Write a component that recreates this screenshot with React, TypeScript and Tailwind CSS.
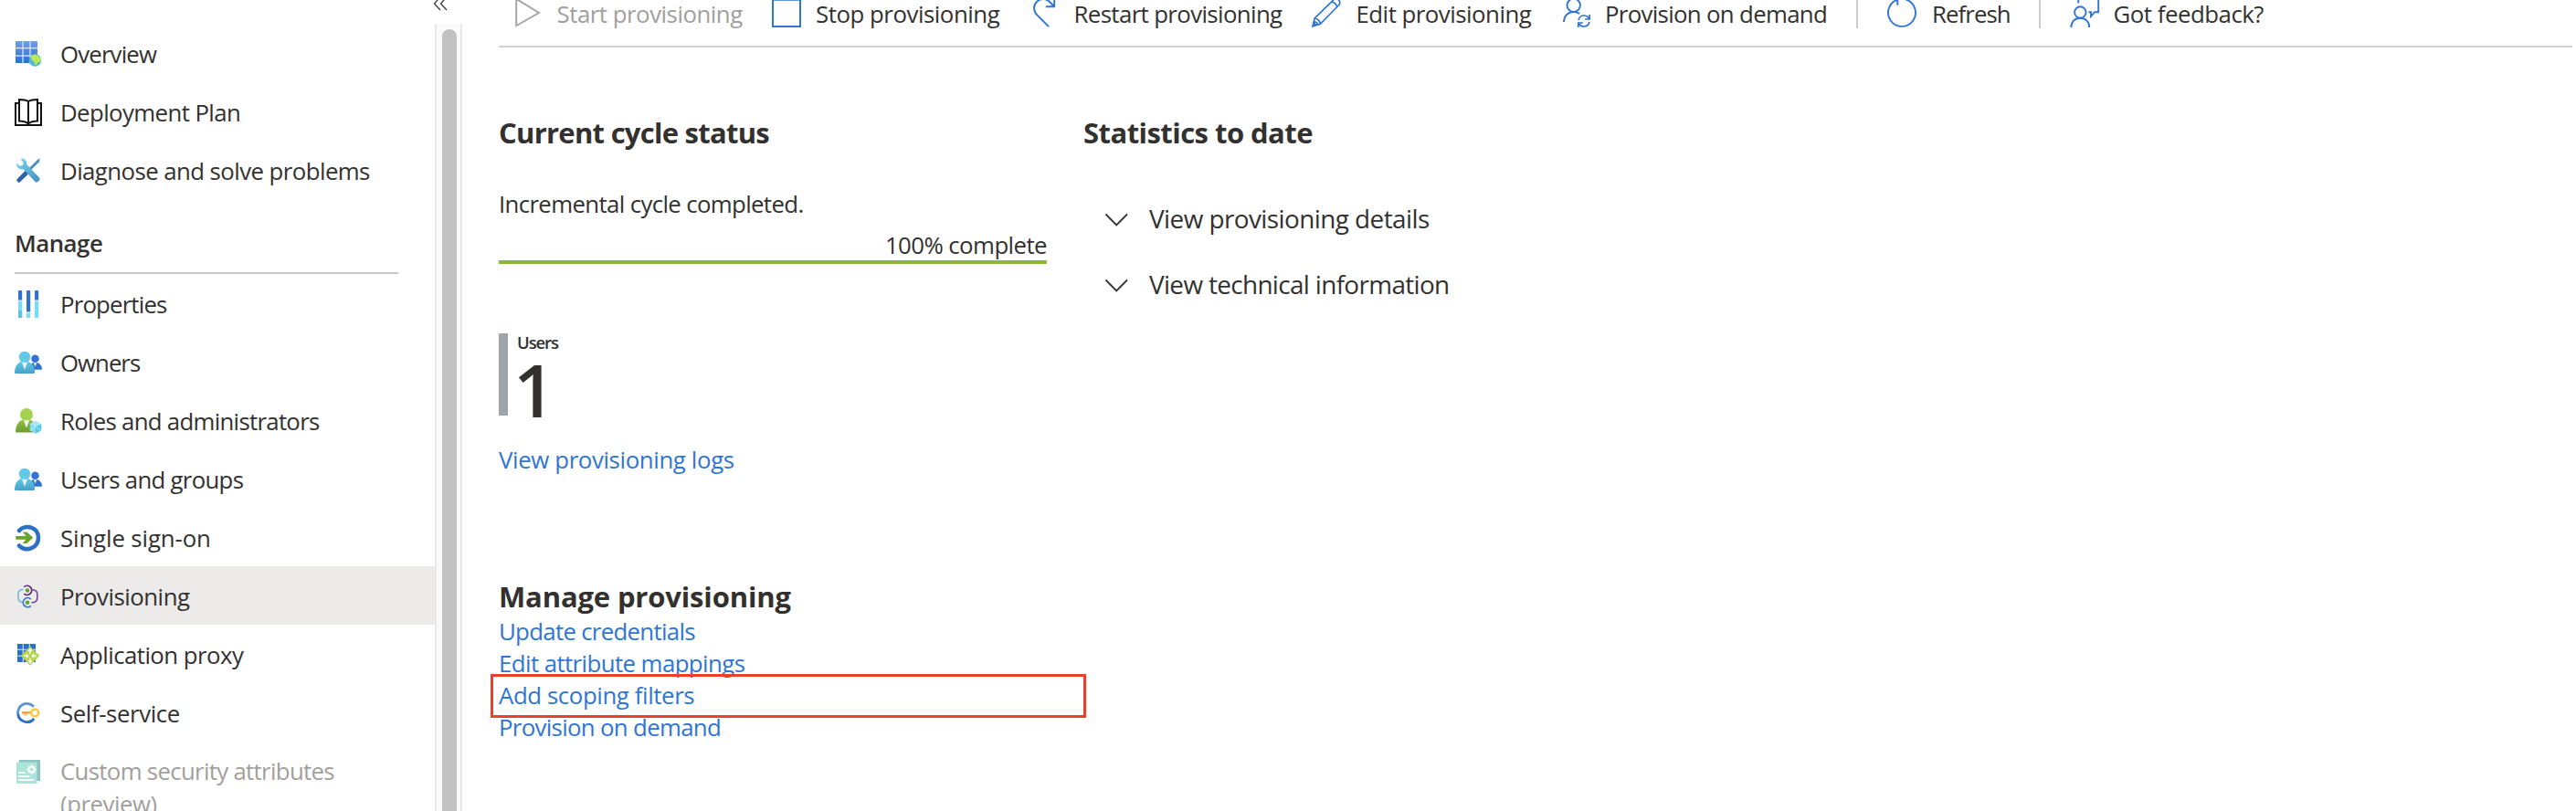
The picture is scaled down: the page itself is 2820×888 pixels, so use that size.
import type { ReactNode } from "react";

const Icon = ({ children, className = "" }: { children: ReactNode; className?: string }) => (
  <svg viewBox="0 0 30 30" className={`mt-[18px] h-[30px] w-[30px] shrink-0 ${className}`} fill="none">
    {children}
  </svg>
);

const OverviewIcon = () => (
  <Icon>
    <defs>
      <linearGradient id="ov" x1="0" y1="0" x2="0" y2="1">
        <stop offset="0" stopColor="#6d9eea" />
        <stop offset="1" stopColor="#2c6fcb" />
      </linearGradient>
    </defs>
    <rect x="1" y="1" width="24" height="24" rx="0.6" fill="url(#ov)" />
    <path d="M9 1v24M17 1v24M1 8.7h24M1 17.2h24" stroke="#dbe8fb" strokeWidth="1.2" />
    <circle cx="22.4" cy="22" r="6.8" fill="#58b6dc" />
    <path d="M17.2 18c1.6-1.8 4-2.8 6.4-2.5l2 1.8 2.6 1.6c.9 2 .8 4-.3 5.6l-2.3-.8-1 2.8-1.5.6c-1.6-.6-.8-2.8-2-3.8-1.600-.5-2.800-1.500-2.300-3.300z" fill="#b9ea52" />
  </Icon>
);

const BookIcon = () => (
  <Icon>
    <path d="M5 5H1v24h28V5h-4" stroke="#111" strokeWidth="2" />
    <path d="M15 3C12 1.200 8.500 1 5 1v23.500c3.500 0 7 .5 10 3 3-2.500 6.500-3 10-3V1c-3.500 0-7 .2-10 2zM15 3v24.500" stroke="#111" strokeWidth="2" />
  </Icon>
);

const ToolsIcon = () => (
  <Icon>
    <defs>
      <linearGradient id="tl" x1="0" y1="0" x2="1" y2="1">
        <stop offset="0" stopColor="#6fd6f3" />
        <stop offset="1" stopColor="#4690bd" />
      </linearGradient>
    </defs>
    <path d="M27.800 1.200l-1 4L17 15l-2-2L25 3z" fill="#3f8fc0" />
    <path d="M12 14.500l3.500 3.500-10.300 10c-.5.500-3.600-2.500-3-3.200z" fill="#2a62ad" />
    <path d="M6.500 1.800c3.600-.9 7.500 2 6.800 6.400l14 14.600c1.500 1.700-2.600 6.300-4.500 4.500L9.500 13.200C5.200 14.300 1.600 10.600 2.300 6.500l3.300 3.200 3.200-.8.8-3z" fill="url(#tl)" />
  </Icon>
);

const PropertiesIcon = () => (
  <Icon>
    <path d="M4 12h4.200v18H4zM13 25h4.200v5H13zM22 12h4.200v18H22z" fill="#76dcf8" />
    <path d="M4 22h4.200v8H4z" fill="#62c0de" />
    <path d="M4 1q0-1 1-1h2.200q1 0 1 1v10.500H4zM13 1q0-1 1-1h2.200q1 0 1 1v22.800H13zM22 1q0-1 1-1h2.200q1 0 1 1v10.500H22z" fill="#2f73cf" />
    <path d="M3 10.600h6.200v1.600H3zM12 23.500h6.200v1.600H12zM21 10.600h6.200v1.600H21z" fill="#e4e6e8" />
  </Icon>
);

const PeopleIcon = () => (
  <Icon>
    <defs>
      <linearGradient id="pp" x1="0" y1="0" x2="0" y2="1">
        <stop offset="0" stopColor="#5ec7ea" />
        <stop offset="1" stopColor="#4a9fc9" />
      </linearGradient>
    </defs>
    <circle cx="22.500" cy="10.800" r="4.300" fill="#2f73cf" />
    <path d="M16 22.800c0-4.500 2-7 4-7.500h5c3 .6 4.800 4 5 6.500 0 .7-.4 1-1 1z" fill="#2f73cf" />
    <path d="M20.800 15.300h3.400l-1.700 4.500z" fill="#e6f1fb" />
    <path d="M0 25.500C.2 20 2.800 15.300 7 14.300h8c4.400 1 7 5.700 7.200 11.200 0 1-.6 1.500-1.500 1.500H1.500C.6 27 0 26.500 0 25.500z" fill="url(#pp)" />
    <circle cx="11" cy="9" r="6.300" fill="#62c9ea" />
    <path d="M8 14.800h6l-3 8z" fill="#e8f6fc" />
  </Icon>
);

const RolesIcon = () => (
  <Icon>
    <defs>
      <linearGradient id="rl" x1="0" y1="0" x2="0" y2="1">
        <stop offset="0" stopColor="#8ec03c" />
        <stop offset="1" stopColor="#6c9c35" />
      </linearGradient>
    </defs>
    <path d="M1 26.500C1.200 20 4 15 8.500 14h8.500c4.400 1 7 6 7 13.500H2q-1 0-1-1z" fill="url(#rl)" />
    <circle cx="13" cy="8" r="7" fill="#a4d350" />
    <path d="M9.800 14.300h6.400L13 22.500z" fill="#f4f9ec" />
    <path d="M23 15l6.200 3.300v7L23 28.700l-6.200-3.400v-7z" fill="#7fdcf5" />
    <path d="M23 15l6.200 3.300L23 21.500l-6.200-3.200z" fill="#a9e8fa" />
    <path d="M23 21.500v7.200l6.200-3.400v-7z" fill="#58c6e6" />
    <path d="M16.800 25.300L23 21.500l6.200 3.800" stroke="#d5f4fc" strokeWidth="0.700" />
  </Icon>
);

const SsoIcon = () => (
  <Icon>
    <path d="M5 7c6.500-7.500 21-4 21 7.800S11.500 31 5 23.500" stroke="#2d6fc4" strokeWidth="4.600" strokeLinecap="round" />
    <path d="M1.300 13h11.200L8.800 8.500h4.500l7 6.300-7 6.300H8.800l3.700-4.400H1.300z" fill="#6ba22f" />
  </Icon>
);

const ProvisioningIcon = () => (
  <Icon>
    <path d="M9.500 7.500C6 7.500 4 9 4 12v4.500c0 3 2 5 5.500 5" stroke="#74b5e2" strokeWidth="1.600" />
    <path d="M18.500 7.800c4 0 6.300 1.500 6.300 4.700v4.200c0 3-2 5-6.300 5" stroke="#75429c" strokeWidth="1.600" />
    <path d="M10.300 4.700a5 5 0 1 1 0 7.400" stroke="#5c2a84" strokeWidth="1.700" />
    <path d="M17.700 18a5 5 0 1 0 0 7.400" stroke="#2f73cf" strokeWidth="1.700" />
    <circle cx="14" cy="8.500" r="2.300" fill="#6ba22f" />
    <circle cx="14" cy="21.700" r="2.300" fill="#6ba22f" />
  </Icon>
);

const ProxyIcon = () => (
  <Icon>
    <path d="M3 3h20v20H3z" fill="#2d6fc4" />
    <path d="M9.300 3v20M16.300 3v20M3 9.300h20M3 16.300h20" stroke="#dbe8fb" strokeWidth="1.100" />
    <path d="M17 5.700L27.300 16 17 26.800 6.700 16z" fill="#b5d548" />
    <path d="M17 14V9.500M17 18.500V23M10 16.200h4.500M24 16.200h-4.500M15 11l2-2.200L19 11M15 21.500l2 2.200 2-2.200M12.800 14.200l2 2-2 2M21.200 14.200l-2 2 2 2" stroke="#fff" strokeWidth="1.300" />
  </Icon>
);

const SelfServiceIcon = () => (
  <Icon>
    <path d="M21 7.700A10 10 0 0 0 3.900 17" stroke="#5a93dc" strokeWidth="2.800" />
    <path d="M3.700 16A10 10 0 0 0 21.300 21" stroke="#2d6fc4" strokeWidth="2.800" />
    <path d="M8 13h11v2.600h-5.500v2h-1.400v-2h-1v2H9.700v-2H8z" fill="#f7a63c" />
    <circle cx="22.200" cy="14.400" r="3.900" stroke="#fbc93a" strokeWidth="2.600" />
  </Icon>
);

const AttributesIcon = () => (
  <Icon>
    <path d="M5 2h23v23H5z" fill="#8fc3bf" />
    <path d="M2 4.500h22.500V28H2z" fill="#aee3da" />
    <path d="M4 16.200h7.500M4 20.200h12.500M4 24h17" stroke="#fff" strokeWidth="1.800" />
    <circle cx="18.600" cy="12.500" r="3" stroke="#fff" strokeWidth="1.900" />
    <path d="M18.600 7.500v2M18.600 15.500v2M13.600 12.500h2M21.600 12.500h2M15.100 9l1.400 1.400M20.700 14.600l1.400 1.400M22.100 9l-1.400 1.400M16.500 14.600L15.100 16" stroke="#fff" strokeWidth="1.700" />
  </Icon>
);

const NavItem = ({ icon, label, tracking, active }: { icon: ReactNode; label: string; tracking: string; active?: boolean }) => (
  <a className={`flex h-16 gap-5 pl-4 ${active ? "bg-[#ecebe9]" : ""}`}>
    {icon}
    <span className={`mt-[15px] leading-9 whitespace-nowrap ${tracking}`}>{label}</span>
  </a>
);

const Command = ({ width, icon, label, tracking, muted }: { width: string; icon: ReactNode; label: string; tracking: string; muted?: boolean }) => (
  <button className={`flex h-9 shrink-0 items-start leading-9 whitespace-nowrap ${width} ${muted ? "text-[#a19f9d]" : ""}`}>
    {icon}
    <span className={`pl-px ${tracking}`}>{label}</span>
  </button>
);

const Separator = () => <div className="mr-8 h-[34px] w-[2px] shrink-0 bg-[#cccccc]" />;

const blue = "#2f75d3";

const PlayIcon = () => (
  <svg className="h-9 w-[44.5px] shrink-0" viewBox="564 -3 44.5 36" fill="none">
    <path d="M565.200-1.200v29.400L590 14z" stroke="#a3a3a3" strokeWidth="1.900" />
  </svg>
);
const StopIcon = () => (
  <svg className="h-9 w-[47px] shrink-0" viewBox="845 -3 47 36" fill="none">
    <path d="M846-.2h30V29h-30z" stroke={blue} strokeWidth="2" />
  </svg>
);
const RestartIcon = () => (
  <svg className="h-9 w-[44.5px] shrink-0" viewBox="1130 -3 44.5 36" fill="none">
    <path d="M1148 29.200l-12.500-12.500C1131 12 1131 5.500 1135 2c4-4 10-4 14 0l5 5M1154.200-2v9.200h-9.400" stroke={blue} strokeWidth="1.900" />
  </svg>
);
const PencilIcon = () => (
  <svg className="h-9 w-[47.5px] shrink-0" viewBox="1436 -3 47.5 36" fill="none">
    <path d="M1437 28.800l2.200-8.800 22-21.500c2-1.700 6.200 2.200 5.500 5.200-.2.900-.5 1.300-1 1.800l-20.300 20.800zM1439.200 20c3.300.5 5.700 2.700 6.200 6.300M1457.800 2c3 .6 5.200 2.700 5.900 5.700M1437.500 27.500l2.500-3.500c1.500.3 2.200 1.200 2.500 2.500z" stroke={blue} strokeWidth="1.700" />
  </svg>
);
const UserSyncIcon = () => (
  <svg className="h-9 w-[45px] shrink-0" viewBox="1711 -3 45 36" fill="none">
    <circle cx="1722.700" cy="5.800" r="7.200" stroke={blue} strokeWidth="1.900" />
    <path d="M1712 24c0-6.500 4.500-11 10.500-11 2.500 0 4.800.6 6.700 2" stroke={blue} strokeWidth="1.900" />
    <path d="M1728 22c.8-3.200 3.200-5 6-5 2.200 0 4 1 5.200 2.800M1740.200 16v5h-5M1740 24c-.8 3.200-3.200 5-6 5-2.200 0-4-1-5.200-2.800M1727.800 30v-5h5" stroke={blue} strokeWidth="1.700" />
  </svg>
);
const RefreshIcon = () => (
  <svg className="h-9 w-[48px] shrink-0" viewBox="2066 -3 48 36" fill="none">
    <path d="M2077.500-.4a15 15 0 1 0 9 0M2077.300 5.800V-2" stroke={blue} strokeWidth="1.900" />
  </svg>
);
const FeedbackIcon = () => (
  <svg className="h-9 w-[46.5px] shrink-0" viewBox="2266 -3 46.5 36" fill="none">
    <circle cx="2277.300" cy="13.500" r="6.200" stroke={blue} strokeWidth="1.900" />
    <path d="M2267.300 30c0-6 4-10.300 10-10.300s10 4.300 10 10.300M2275.200 3.500V-2M2297.200-2v15.200h-4.200l-4 4.800v-4.800h-2.500" stroke={blue} strokeWidth="1.900" />
  </svg>
);

const Expander = ({ label, tracking }: { label: string; tracking: string }) => (
  <div className="flex h-10 text-[27.9px] leading-10">
    <svg className="h-10 w-[72px] shrink-0" viewBox="0 0 72 40" fill="none">
      <path d="M24.500 15.500L36.200 27.500 48 15.500" stroke="#323130" strokeWidth="1.800" />
    </svg>
    <span className={tracking}>{label}</span>
  </div>
);

export default function App() {
  return (
    <div className="flex h-[888px] w-[2820px] overflow-hidden bg-white font-['Open_Sans','Noto_Sans',sans-serif] text-[25.8px] text-[#323130]">
      <aside className="flex w-[506px] shrink-0 flex-col">
        <div className="flex h-[26px] shrink-0 justify-end pr-4">
          <svg className="h-3 w-4" viewBox="474 0 16 12" fill="none">
            <path d="M482-3.500L475.500 4l6.500 7M489-3.500L482.500 4l6.500 7" stroke="#3b3a39" strokeWidth="1.300" />
          </svg>
        </div>
        <div className="flex h-[862px]">
          <nav className="w-[476px] overflow-hidden">
            <NavItem icon={<OverviewIcon />} label="Overview" tracking="tracking-[-0.84px]" />
            <NavItem icon={<BookIcon />} label="Deployment Plan" tracking="tracking-[-0.6px]" />
            <NavItem icon={<ToolsIcon />} label="Diagnose and solve problems" tracking="tracking-[-0.57px]" />
            <h3 className="ml-4 h-[82px] w-[420px] border-b-2 border-[#c8c8c8] pt-[30px] leading-9 font-semibold tracking-[-0.5px]">Manage</h3>
            <NavItem icon={<PropertiesIcon />} label="Properties" tracking="tracking-[-0.84px]" />
            <NavItem icon={<PeopleIcon />} label="Owners" tracking="tracking-[-1px]" />
            <NavItem icon={<RolesIcon />} label="Roles and administrators" tracking="tracking-[-0.72px]" />
            <NavItem icon={<PeopleIcon />} label="Users and groups" tracking="tracking-[-0.72px]" />
            <NavItem icon={<SsoIcon />} label="Single sign-on" tracking="tracking-[-0.12px]" />
            <NavItem icon={<ProvisioningIcon />} label="Provisioning" tracking="tracking-[-0.5px]" active />
            <NavItem icon={<ProxyIcon />} label="Application proxy" tracking="tracking-[-0.55px]" />
            <NavItem icon={<SelfServiceIcon />} label="Self-service" tracking="tracking-[-0.4px]" />
            <a className="flex h-[86px] gap-5 pl-4 text-[#a19f9d]">
              <AttributesIcon />
              <span className="mt-[14px] leading-9 tracking-[-0.69px]">
                Custom security attributes
                <br />
                <span className="tracking-[-0.48px]">(preview)</span>
              </span>
            </a>
          </nav>
          <div className="w-[30px] border-x-2 border-[#e8e8e8] bg-[#fafafa] pt-[6px] pl-[6px]">
            <div className="h-[900px] w-4 rounded-full bg-[#c1c1c1]" />
          </div>
        </div>
      </aside>

      <main className="flex w-[2314px] flex-col pr-1 pl-10">
        <div className="-mt-[3px] flex h-[55px] shrink-0 items-start border-b-2 border-[#d2d2d2] pl-[18px]">
          <Command width="w-[281px]" icon={<PlayIcon />} label="Start provisioning" tracking="tracking-[-0.48px]" muted />
          <Command width="w-[285px]" icon={<StopIcon />} label="Stop provisioning" tracking="tracking-[-0.46px]" />
          <Command width="w-[306px]" icon={<RestartIcon />} label="Restart provisioning" tracking="tracking-[-0.62px]" />
          <Command width="w-[275px]" icon={<PencilIcon />} label="Edit provisioning" tracking="tracking-[-0.5px]" />
          <Command width="w-[321px]" icon={<UserSyncIcon />} label="Provision on demand" tracking="tracking-[-0.68px]" />
          <Separator />
          <Command width="w-[166px]" icon={<RefreshIcon />} label="Refresh" tracking="tracking-[-0.93px]" />
          <Separator />
          <Command width="w-[220px]" icon={<FeedbackIcon />} label="Got feedback?" tracking="tracking-[-0.48px]" />
        </div>

        <div className="flex pt-[71px]">
          <section className="w-[640px]">
            <h2 className="text-[31px] leading-[44px] font-bold tracking-[-0.73px]">Current cycle status</h2>
            <p className="mt-[38px] leading-9 tracking-[-0.64px]">Incremental cycle completed.</p>
            <div className="mt-[9px] w-[600px]">
              <p className="text-right leading-9 tracking-[-0.57px]">100% complete</p>
              <div className="-mt-px h-1 bg-[#8ab833]" />
            </div>
            <div className="mt-[76px] flex h-[90px] gap-[10px]">
              <div className="w-[10px] bg-[#a0a4a6]" />
              <div className="-mt-[2px] font-semibold">
                <div className="text-[18.5px] leading-6 tracking-[-1.1px]">Users</div>
                <div className="-mt-px -ml-1 text-[80px] leading-[80px]">1</div>
              </div>
            </div>
            <a className="mt-[30px] block leading-9 tracking-[-0.37px] text-[#2f75d3]">View provisioning logs</a>
            <h2 className="mt-[110px] text-[31px] leading-[44px] font-bold tracking-[-0.15px]">Manage provisioning</h2>
            <ul className="-mt-px leading-[35px] text-[#2f75d3]">
              <li className="tracking-[-0.7px]">Update credentials</li>
              <li className="tracking-[-0.58px]">Edit attribute mappings</li>
              <li className="relative tracking-[-0.4px]">
                Add scoping filters
                <div className="absolute -top-[6px] -left-[9px] h-12 w-[652px] border-[3px] border-[#ec4028]" />
              </li>
              <li className="tracking-[-0.68px]">Provision on demand</li>
            </ul>
          </section>
          <section>
            <h2 className="text-[31px] leading-[44px] font-bold tracking-[-0.54px]">Statistics to date</h2>
            <div className="mt-[52px] flex flex-col gap-8">
              <Expander label="View provisioning details" tracking="tracking-[-0.56px]" />
              <Expander label="View technical information" tracking="tracking-[-0.65px]" />
            </div>
          </section>
        </div>
      </main>
    </div>
  );
}
